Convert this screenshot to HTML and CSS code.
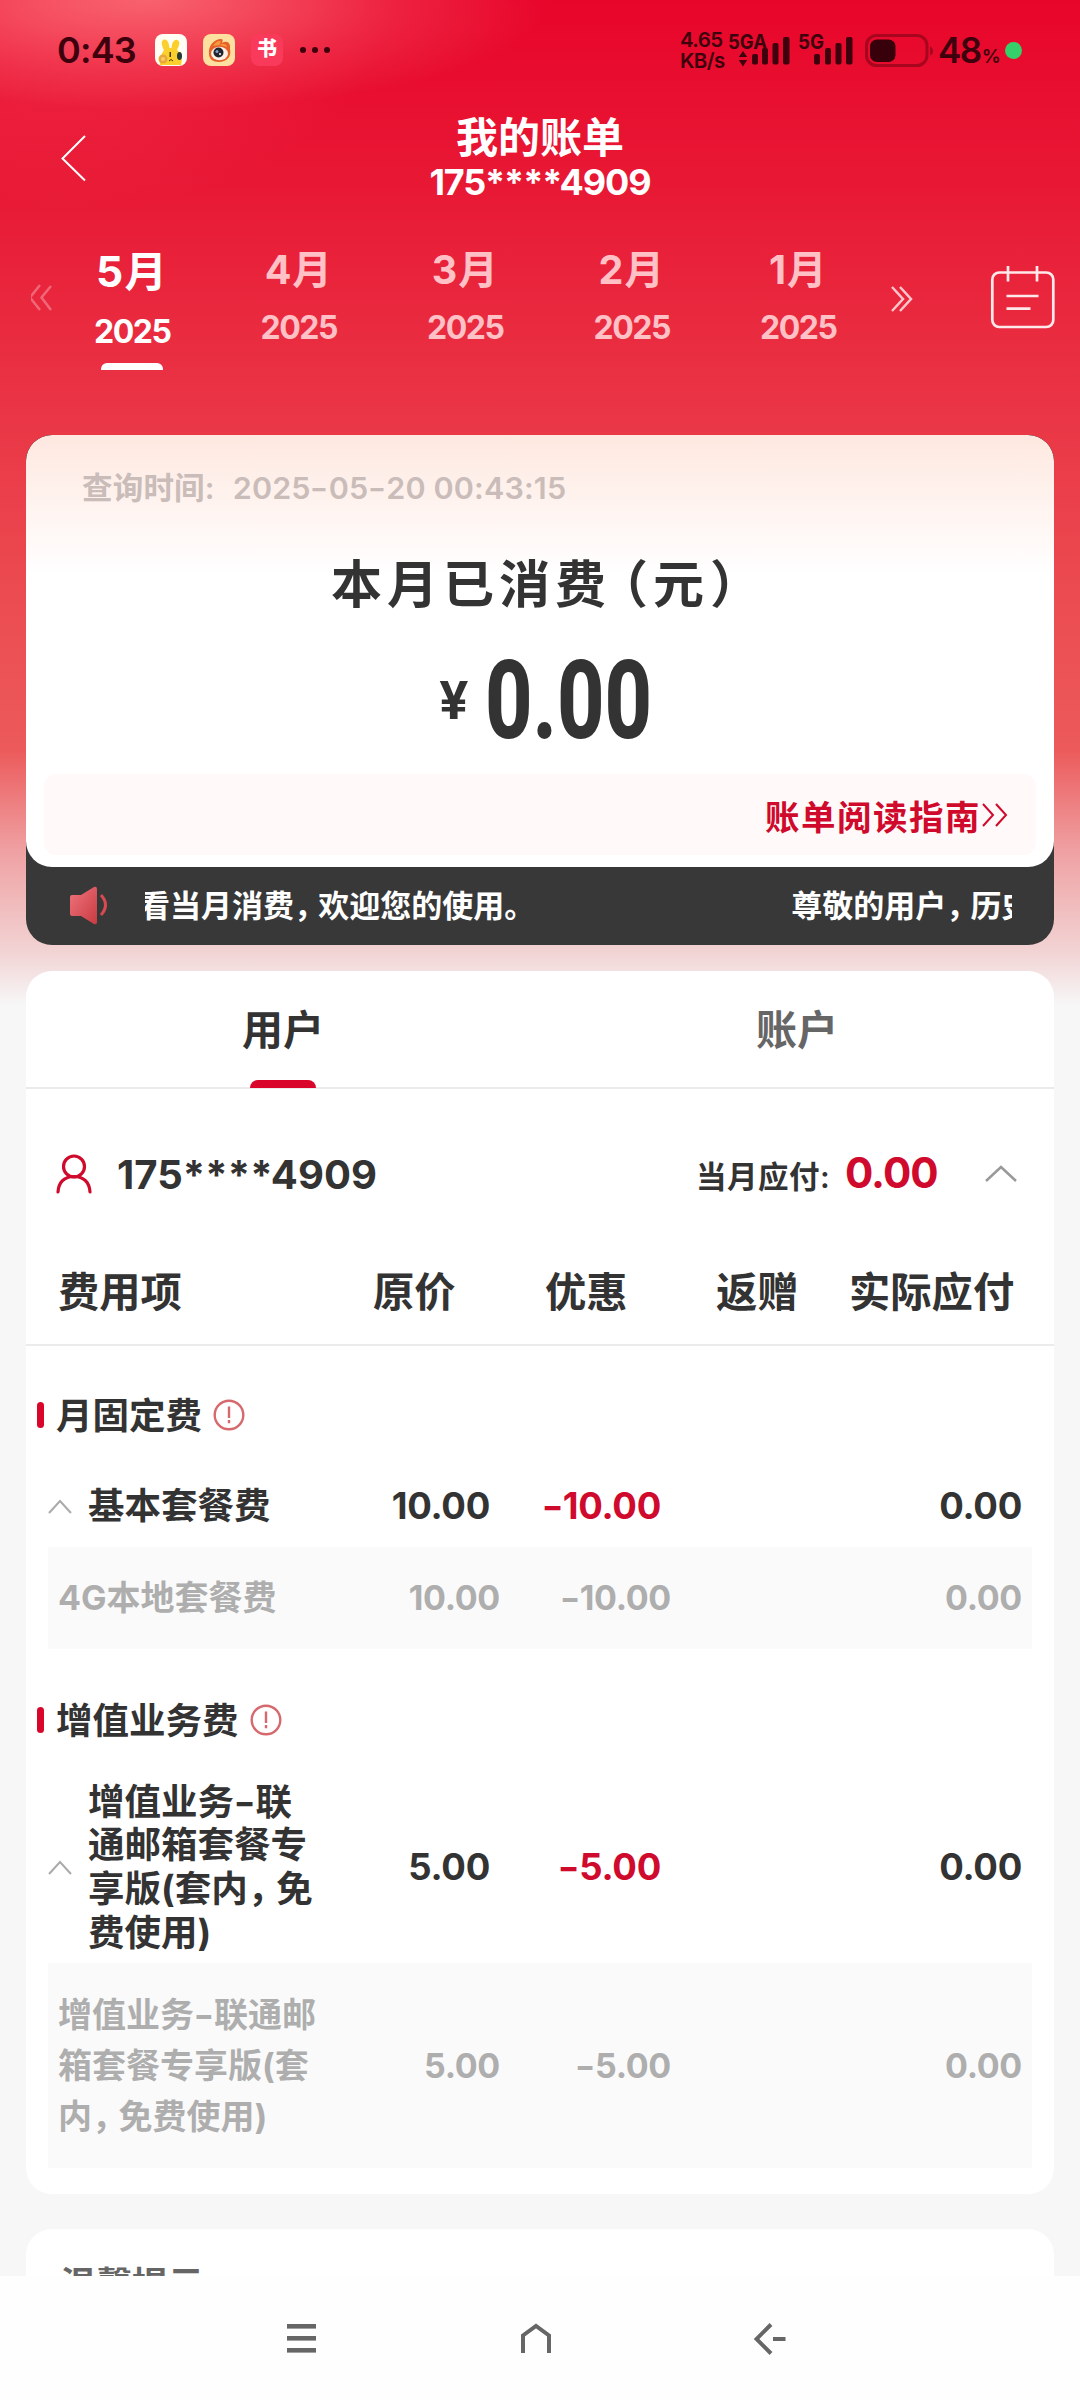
FILE: index.html
```html
<!DOCTYPE html>
<html lang="zh-CN">
<head>
<meta charset="utf-8">
<title>我的账单</title>
<link rel="stylesheet" href="styles.css">
</head>
<body>
<div class="screen">
  <div class="content">
    <header class="status">
      <span class="clock">0:43</span>
      <svg class="app-icon" width="32" height="32" viewBox="0 0 32 32">
        <rect width="32" height="32" rx="8" fill="#fffdf4"/>
        <path d="M5 31C4 25 7 19 9 16C6 11 6 6 9 5.500C13 5 14 10 14.500 14H16.500C17 9 19 5 22 6C26 7 24 12 22 16C26 19 28 25 26 31Z" fill="#fbd02c"/>
        <circle cx="8" cy="25" r="4.500" fill="#e9a83a"/><circle cx="8" cy="25" r="2" fill="#f6cd63"/>
        <ellipse cx="24.500" cy="22" rx="2.500" ry="4" fill="#283a38"/>
        <rect x="14.500" y="18" width="1.500" height="5" fill="#4a3a10"/><path d="M14 27l2-1.500 2 1.500" fill="none" stroke="#4a3a10"/>
      </svg>
      <svg class="app-icon" width="32" height="32" viewBox="0 0 32 32">
        <rect width="32" height="32" rx="8" fill="#fde0a0"/>
        <path d="M6 20C5 12 11 5 18 5C20 5 20 7 19 9C24 6 28 9 27 15C29 23 23 28 16 28C10 28 6 25 6 20Z" fill="#e8602a"/>
        <path d="M10 12C13 7 17 6 18 8L16 11C20 9 24 10 24 13C19 11 14 11 10 12Z" fill="#f59a3c"/>
        <ellipse cx="16.500" cy="19.500" rx="8.500" ry="6.800" fill="#fff1e4"/>
        <circle cx="15.500" cy="18.500" r="5" fill="#22262e"/><circle cx="14" cy="17.500" r="1.500" fill="#7fa0cc"/><circle cx="17" cy="20" r="1" fill="#fff"/>
      </svg>
      <span class="app-icon book">书</span>
      <span class="dots"><i></i><i></i><i></i></span>
      <span class="net">4.65<br>KB/s</span>
      <svg class="signal" width="126" height="44" viewBox="728 27 126 44" fill="#3d000c">
        <g class="signal-label"><text x="728" y="48" textLength="39" lengthAdjust="spacingAndGlyphs">5GA</text><text x="798" y="48" textLength="26" lengthAdjust="spacingAndGlyphs">5G</text></g>
        <path d="M743 50l4.200 6h-8.400zM743 65.500l4.200-6.500h-8.400z"/>
        <rect x="752" y="53" width="6" height="10.500" rx="2"/><rect x="762" y="47" width="6" height="16.500" rx="2"/><rect x="772.500" y="42" width="6" height="21.500" rx="2"/><rect x="783" y="36" width="6.500" height="27.500" rx="2"/>
        <rect x="814" y="53" width="6" height="10.500" rx="2"/><rect x="825" y="47" width="6" height="16.500" rx="2"/><rect x="835.500" y="42" width="6" height="21.500" rx="2"/><rect x="846" y="36" width="6.500" height="27.500" rx="2"/>
      </svg>
      <svg class="battery" width="70" height="34" viewBox="864 32 70 34">
        <rect x="866.500" y="34.500" width="60.500" height="30" rx="10" fill="none" stroke="#a8061f" stroke-width="3"/>
        <rect x="870" y="38.500" width="25.500" height="22.500" rx="7" fill="#38000b"/>
        <path d="M930 45.500q3 1 3 4.500t-3 4.500z" fill="#a8061f"/>
      </svg>
      <span class="percent">48<small>%</small></span>
      <span class="live"></span>
    </header>

    <div class="titlebar">
      <svg class="back" width="26" height="48" viewBox="61 134 26 48" fill="none" stroke="#fff" stroke-width="2"><path d="M85 136L62.500 158.500L85 180.500"/></svg>
      <div class="title"><h1>我的账单</h1><p>175****4909</p></div>
    </div>

    <nav class="months">
      <svg class="prev" width="22" height="28" viewBox="0 0 22 28" fill="none" stroke="#fff" stroke-width="2.500" opacity=".3"><path d="M9 1L-1 13.500L9 26M20 2L10.500 13.500L20 26"/></svg>
      <div class="month active"><b>5月</b><span>2025</span><i></i></div>
      <div class="month"><b>4月</b><span>2025</span></div>
      <div class="month"><b>3月</b><span>2025</span></div>
      <div class="month"><b>2月</b><span>2025</span></div>
      <div class="month"><b>1月</b><span>2025</span></div>
      <svg class="next" width="24" height="28" viewBox="0 0 24 28" fill="none" stroke="#ffc6cc" stroke-width="2.500"><path d="M2 2L13 14L2 26M10 2L21 14L10 26"/></svg>
      <svg class="calendar" width="66" height="64" viewBox="990 265 66 64" fill="none" stroke="#ffe9ea" stroke-width="2.700"><rect x="992.300" y="272.500" width="61" height="54.500" rx="7"/><path d="M1008 266v15.500M1037 266v15.500M1006.500 296h32M1006.500 308.700h24"/></svg>
    </nav>

    <section class="summary">
      <div class="bill">
        <p class="query">查询时间:<span class="stamp">2025<i class="dash">-</i>05<i class="dash">-</i>20 00:43:15</span></p>
        <h2>本月已消费<span class="pl">（</span>元<span class="pr">）</span></h2>
        <div class="amount"><span class="yen">¥</span><span class="sum">0.00</span></div>
        <a class="guide">账单阅读指南<svg width="28" height="26" viewBox="0 0 28 26" fill="none" stroke="#cf0a2c" stroke-width="2"><path d="M2 2L12 13L2 24M15 2L25 13L15 24"/></svg></a>
      </div>
      <div class="notice">
        <svg width="40" height="40" viewBox="68 886 40 40"><defs><linearGradient id="horn" x1="0" x2="1" y2="1"><stop stop-color="#f0747c"/><stop offset="1" stop-color="#c93b42"/></linearGradient></defs><path d="M72 895h9l13-8q3-1 3 2v33q0 3-3 2l-13-8h-9q-2 0-2-2v-17q0-2 2-2z" fill="url(#horn)"/><path d="M101 895q9 10 0 20" fill="none" stroke="#d64a50" stroke-width="3"/></svg>
        <div class="ticker"><span class="line">看当月消费<i class="comma">，</i>欢迎您的使用。</span><span class="line">尊敬的用户<i class="comma">，</i>历史</span></div>
      </div>
    </section>

    <section class="details">
      <div class="tabs"><div class="tab on">用户<i></i></div><div class="tab">账户</div></div>
      <div class="owner">
        <svg class="person" width="38" height="40" viewBox="55 1155 38 40" fill="none" stroke="#cf0a2c" stroke-width="3.200"><circle cx="74" cy="1167.500" r="10.500"/><path d="M58 1193q1-15 16-15.500q15 .5 16 15.500" stroke-linecap="round"/></svg>
        <span class="phone">175****4909</span>
        <span class="due">当月应付:</span><span class="due-sum">0.00</span>
        <svg class="fold" width="34" height="20" viewBox="0 0 34 20" fill="none" stroke="#999" stroke-width="2.500"><path d="M2 17L17 3L32 17"/></svg>
      </div>
      <div class="head"><span>费用项</span><span>原价</span><span>优惠</span><span>返赠</span><span>实际应付</span></div>

      <div class="group"><i></i><b>月固定费</b><svg width="32" height="32" viewBox="0 0 32 32" fill="none" stroke="#d6696d" stroke-width="2.400"><circle cx="16" cy="16" r="14.300"/><path d="M16 7.500v11.500M16 21v3.200"/></svg></div>
      <div class="row first">
        <svg width="24" height="16" viewBox="0 0 24 16" fill="none" stroke="#aaa" stroke-width="2"><path d="M1 14L12 2L23 14"/></svg>
        <b>基本套餐费</b><span>10.00</span><span class="red"><i class="dash">-</i>10.00</span><span>0.00</span>
      </div>
      <div class="sub"><b>4G本地套餐费</b><span>10.00</span><span><i class="dash">-</i>10.00</span><span>0.00</span></div>

      <div class="group second"><i></i><b>增值业务费</b><svg width="32" height="32" viewBox="0 0 32 32" fill="none" stroke="#d6696d" stroke-width="2.400"><circle cx="16" cy="16" r="14.300"/><path d="M16 7.500v11.500M16 21v3.200"/></svg></div>
      <div class="row long">
        <svg width="24" height="16" viewBox="0 0 24 16" fill="none" stroke="#aaa" stroke-width="2"><path d="M1 14L12 2L23 14"/></svg>
        <b>增值业务<i class="dash">-</i>联<br>通邮箱套餐专<br>享版(套内<i class="comma">，</i>免<br>费使用)</b><span>5.00</span><span class="red"><i class="dash">-</i>5.00</span><span>0.00</span>
      </div>
      <div class="sub"><b>增值业务<i class="dash">-</i>联通邮<br>箱套餐专享版(套<br>内<i class="comma">，</i>免费使用)</b><span>5.00</span><span><i class="dash">-</i>5.00</span><span>0.00</span></div>
    </section>

    <section class="tips">温馨提示</section>
  </div>

  <footer class="keys">
    <svg width="32" height="34" viewBox="0 0 32 34" fill="#666"><rect x="1" y="2" width="29" height="4.600"/><rect x="1" y="14" width="29" height="4.600"/><rect x="1" y="26" width="29" height="4.600"/></svg>
    <svg width="34" height="34" viewBox="0 0 34 34" fill="none" stroke="#666" stroke-width="4"><path d="M4 31V13.500L17 4L30 13.500V31"/></svg>
    <svg width="34" height="34" viewBox="1 0 34 34" fill="none" stroke="#666" stroke-width="4"><path d="M18 2.500L3.500 17L18 31.500M20 17h12.500"/></svg>
  </footer>
</div>
</body>
</html>
```
FILE: styles.css
```css
* { box-sizing: border-box; margin: 0; padding: 0; }
body { font-family: Inter, "Noto Sans CJK SC", sans-serif; font-weight: 600; color: #333; width: 1080px; }
i { font-style: normal; }
svg { display: block; flex: none; }
.screen { width: 1080px; height: 2400px; overflow: hidden; display: flex; flex-direction: column; background: #fefefe; }
.content {
  height: 2276px; flex: none; overflow: hidden;
  background:
    radial-gradient(ellipse 400px 110px at 150px 0, rgba(255,140,140,.62), rgba(255,120,130,.25) 60%, rgba(255,120,130,0) 100%) no-repeat,
    radial-gradient(ellipse 330px 210px at 60px 0, rgba(255,110,120,.3), rgba(255,110,120,0) 100%) no-repeat,
    linear-gradient(#e8052a 0, #e81b36 210px, #ea3646 420px, #eb4c51 600px, #ec5a5b 750px, #efa0a2 850px, #f2d2d3 950px, #f7f7f7 1005px);
}
.dash { display: inline-block; transform: scaleX(1.3); margin: 0 .06em; }
.comma { letter-spacing: -.22em; }

.status { height: 100px; display: flex; align-items: center; padding-left: 57px; color: #3d000c; }
.clock { width: 98px; font-size: 36px; letter-spacing: -.8px; }
.app-icon { margin-right: 16px; width: 32px; height: 32px; }
.book { border-radius: 8px; background: #f93a5b; color: #fff; font-size: 20px; font-weight: 900; line-height: 31px; text-align: center; }
.dots { display: flex; gap: 6px; margin-left: 1px; width: 380px; }
.dots i { width: 6px; height: 6px; border-radius: 50%; background: #3d000c; }
.net { font-size: 20.500px; line-height: 21px; width: 48px; font-weight: 600; letter-spacing: -.6px; white-space: nowrap; }
.signal-label { font-size: 20px; font-weight: 700; }
.battery { margin-left: 10px; }
.percent { margin-left: 4px; width: 66px; font-size: 35px; letter-spacing: -1.500px; white-space: nowrap; }
.percent small { font-size: 19px; margin-left: 1px; }
.live { width: 17px; height: 17px; border-radius: 50%; background: #36d06a; margin-left: 1px; }

.titlebar { height: 130px; display: flex; color: #fff; }
.back { margin: 34px 0 0 61px; }
.title { width: 906px; text-align: center; padding-top: 13px; }
.title h1 { font-size: 42px; line-height: 50px; font-weight: 700; }
.title p { font-size: 36px; line-height: 38px; font-weight: 700; letter-spacing: -1.100px; }

.months { height: 205px; display: flex; color: #ffc0c6; }
.prev { margin: 54px -4px 0 31px; }
.month { width: 166.500px; display: flex; flex-direction: column; align-items: center; padding-top: 14px; }
.month b { font-size: 39.500px; line-height: 52px; font-weight: 700; letter-spacing: 1px; }
.month span { font-size: 32px; line-height: 36px; margin-top: 14px; font-weight: 700; letter-spacing: -1.500px; }
.active { color: #fff; padding-top: 16px; }
.month.active b { font-size: 42.500px; letter-spacing: 1.500px; }
.month.active span { margin-top: 16px; }
.active i { width: 62px; height: 7px; margin-top: 13px; border-radius: 6px 6px 0 0; background: #fff; }
.next { margin: 55px 0 0 8px; }
.calendar { margin: 35px 0 0 76px; }

.summary { margin: 0 26px; height: 510px; background: #383838; border-radius: 26px; overflow: hidden; }
.bill { height: 432px; border-radius: 26px; overflow: hidden; background: linear-gradient(#fee8e0 0, #fff 140px); padding: 33px 18px 0; }
.query { font-size: 30.500px; line-height: 40px; color: #c9bcb9; padding-left: 38px; font-weight: 600; white-space: nowrap; letter-spacing: .2px; }
.stamp { margin-left: 18px; letter-spacing: .15px; }
.bill h2 { font-size: 51px; line-height: 70px; letter-spacing: 5px; margin-top: 42px; padding-left: 287px; font-weight: 700; white-space: nowrap; }
.pl { margin-left: -14px; }
.pr { margin-left: 1px; }
.amount { display: flex; align-items: center; height: 110px; margin-top: 26px; padding-left: 395px; }
.yen { width: 46px; font-size: 52px; font-weight: 700; line-height: 60px; }
.sum { font-family: Roboto, sans-serif; font-weight: 800; font-size: 110px; line-height: 110px; transform: scaleX(.75); transform-origin: 0 50%; }
.guide { display: flex; align-items: center; justify-content: flex-end; height: 81px; margin-top: 18px; padding-right: 27px; border-radius: 12px; background: #fffaf9; color: #cf0a2c; font-size: 34.500px; letter-spacing: 1.500px; }
.notice { height: 78px; display: flex; align-items: center; padding-left: 42px; color: #fff; }
.ticker { margin-left: 37px; width: 867px; overflow: hidden; display: flex; gap: 256px; font-size: 31px; line-height: 44px; white-space: nowrap; }
.ticker .line:first-child { margin-left: -6px; }

.details { margin: 26px 26px 0; height: 1223px; border-radius: 26px; background: #fff; overflow: hidden; }
.tabs { height: 118px; display: flex; border-bottom: 2px solid #ebebeb; }
.tab { flex: 1; height: 118px; display: flex; flex-direction: column; align-items: center; font-size: 41px; line-height: 60px; padding-top: 29px; color: #666; }
.on { color: #333; }
.on i { width: 66px; height: 8px; margin-top: 20px; border-radius: 8px 8px 0 0; background: #d9052b; }
.owner { height: 170px; display: flex; align-items: center; padding-left: 29px; }
.phone { font-size: 40px; font-weight: 700; margin-left: 24px; width: 579px; letter-spacing: .1px; }
.due { font-size: 30.500px; width: 149px; white-space: nowrap; margin-top: 2px; letter-spacing: .5px; }
.due-sum { font-size: 42px; font-weight: 700; color: #cf0a2c; letter-spacing: -1px; width: 139px; margin-top: -3px; }
.head { height: 87px; display: grid; grid-template-columns: 315px 172px 171px 133px 1fr; padding-left: 32px; font-size: 41.300px; line-height: 66px; border-bottom: 2px solid #ebebeb; white-space: nowrap; }
.group { display: flex; align-items: center; height: 60px; margin-top: 39px; padding-left: 11px; font-size: 36.500px; }
.group i { width: 7px; height: 26px; border-radius: 4px; background: #d9052b; margin-right: 12px; }
.group b { font-weight: 700; padding-bottom: 4px; }
.group svg { margin-left: 11px; }
.row, .sub { display: grid; align-items: center; white-space: nowrap; text-align: right; margin: 0 22px; font-weight: 700; letter-spacing: -.3px; }
.row { grid-template-columns: 40px 277px 125px 171px 1fr; height: 83px; margin-top: 19px; padding: 3px 10px 0 0; font-size: 36.500px; line-height: 43.700px; }
.row b, .sub b { text-align: left; font-weight: 700; letter-spacing: 0; }
.sub { grid-template-columns: 318px 124px 171px 1fr; min-height: 102px; padding: 0 10px 1px; background: #fafafa; color: #aeaeae; font-size: 34px; line-height: 51px; }
.red { color: #cf0a2c; }
.second { margin-top: 41px; }
.long { height: 193px; margin-top: 20px; }
.long + .sub { height: 205px; }

.tips { margin: 35px 26px 0; height: 80px; border-radius: 26px 26px 0 0; background: #fff; padding: 30px 0 0 34px; font-size: 36px; line-height: 52px; color: #666; }
.keys { height: 124px; display: flex; align-items: center; padding: 2px 0 0 286px; gap: 201px; }
```
